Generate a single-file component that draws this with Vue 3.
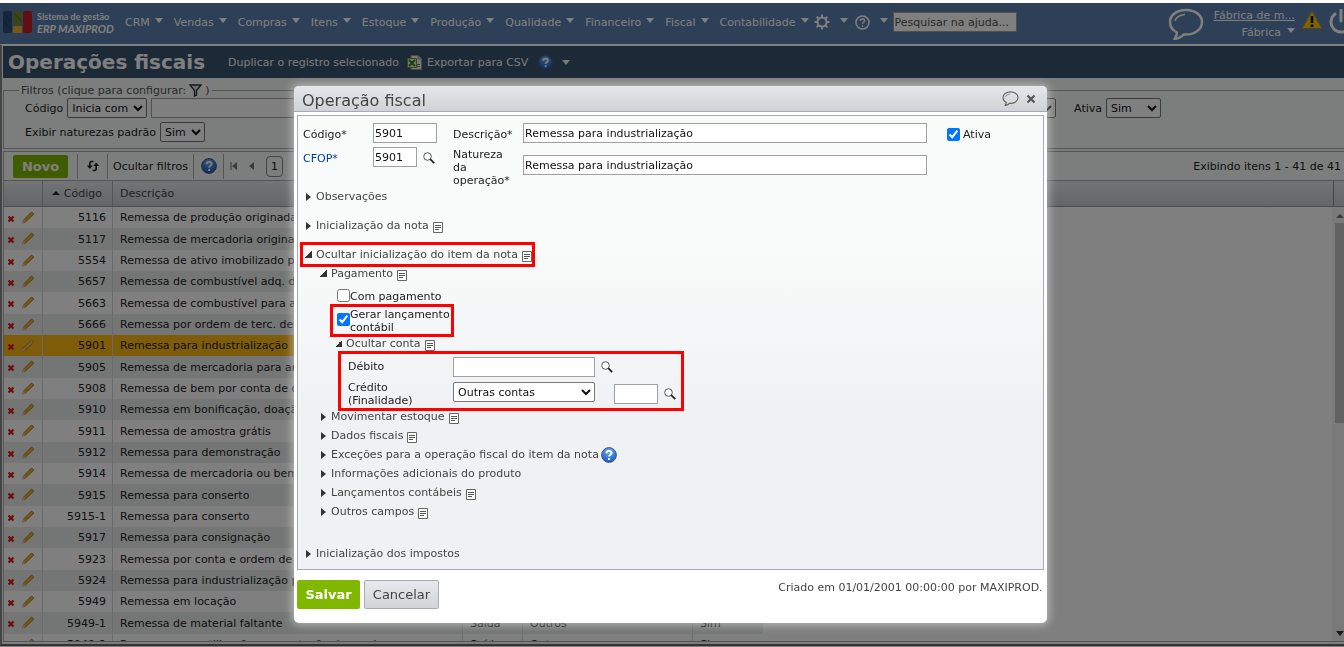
<script setup>
import { ref } from 'vue'

const menus = ['CRM', 'Vendas', 'Compras', 'Itens', 'Estoque', 'Produção', 'Qualidade', 'Financeiro', 'Fiscal', 'Contabilidade']

const rows = [
  ['5116', 'Remessa de produção originada'],
  ['5117', 'Remessa de mercadoria originada'],
  ['5554', 'Remessa de ativo imobilizado p/ uso'],
  ['5657', 'Remessa de combustível adq. de'],
  ['5663', 'Remessa de combustível para arm.'],
  ['5666', 'Remessa por ordem de terc. de comb.'],
  ['5901', 'Remessa para industrialização'],
  ['5905', 'Remessa de mercadoria para arm.'],
  ['5908', 'Remessa de bem por conta de contrato'],
  ['5910', 'Remessa em bonificação, doação'],
  ['5911', 'Remessa de amostra grátis'],
  ['5912', 'Remessa para demonstração'],
  ['5914', 'Remessa de mercadoria ou bem'],
  ['5915', 'Remessa para conserto'],
  ['5915-1', 'Remessa para conserto'],
  ['5917', 'Remessa para consignação'],
  ['5923', 'Remessa por conta e ordem de terc.'],
  ['5924', 'Remessa para industrialização por'],
  ['5949', 'Remessa em locação'],
  ['5949-1', 'Remessa de material faltante', 'Saída', 'Outros', 'Sim'],
  ['5949-2', 'Remessa para utilização na prestação de serviço', 'Saída', 'Outros', 'Sim'],
]

const itemSections = [
  { text: 'Movimentar estoque', note: true },
  { text: 'Dados fiscais', note: true },
  { text: 'Exceções para a operação fiscal do item da nota', help: true },
  { text: 'Informações adicionais do produto' },
  { text: 'Lançamentos contábeis', note: true },
  { text: 'Outros campos', note: true },
]

const codigo = ref('5901')
const cfop = ref('5901')
const descricao = ref('Remessa para industrialização')
const natureza = ref('Remessa para industrialização')
const ativa = ref(true)
const comPagamento = ref(false)
const gerarLancamento = ref(true)
</script>

<template>
  <svg class="defs" width="0" height="0" aria-hidden="true">
    <defs>
      <radialGradient id="ball" cx="50%" cy="25%" r="75%">
        <stop offset="0" stop-color="#6fb0f4" /><stop offset="1" stop-color="#1458c0" />
      </radialGradient>
      <symbol id="note" viewBox="0 0 10 11">
        <path d="M.5.5h9v10h-9z" fill="#fff" stroke="#666" />
        <path d="M2 3.5h6M2 5.5h6M2 7.5h4" stroke="#555" />
      </symbol>
      <symbol id="lens" viewBox="0 0 12 12">
        <circle cx="4.500" cy="4.500" r="3.800" fill="#fff" stroke="#555" />
        <path d="M7.200 7.200l4 4" stroke="#222" stroke-width="1.800" />
      </symbol>
      <symbol id="help" viewBox="0 0 16 16">
        <circle cx="8" cy="8" r="7.4" fill="url(#ball)" stroke="#4a5a78" stroke-width="1" />
        <path d="M5.6 6.2c0-3.2 5-3 5-.2 0 1.7-2.5 1.700-2.500 3.500" fill="none" stroke="#fff" stroke-width="1.900" />
        <path d="M7.100 11h2v2h-2z" fill="#fff" />
      </symbol>
      <symbol id="bubble" viewBox="0 0 36 32">
        <path d="M18 2C9 2 2 7 2 14c0 5 3 8.500 7 10.500 0 2.500-1 4.500-2.500 6.500 4-.5 7-2 9-4.500C26 27 34 22 34 14 34 7 27 2 18 2z" fill="none" stroke="currentColor" stroke-width="2.500" stroke-linejoin="round" />
        <path d="M7 13c1-4 5-6 10-6.500" fill="none" stroke="currentColor" stroke-width="1.500" />
      </symbol>
    </defs>
  </svg>

  <div class="page">
    <header class="top">
      <div class="brand">
        <svg width="29" height="22" viewBox="0 0 29 22" aria-hidden="true">
          <rect width="9" height="22" rx="2" fill="#2c4a80" />
          <rect x="10" width="9" height="14" rx="1" fill="#6e8c2c" />
          <rect x="10" y="15" width="9" height="7" rx="1" fill="#f0b020" />
          <rect x="20" width="9" height="22" rx="2" fill="#c81c28" />
          <path d="M1 2l7 8M1 10l7 9M11 2l7 8" stroke="#20344c" stroke-width="1" opacity=".5" />
        </svg>
        <div class="brand-text"><span>Sistema de gestão</span><em>ERP MAXIPROD</em></div>
      </div>
      <nav class="menu">
        <button v-for="m in menus" :key="m" type="button">{{ m }}<i class="down"></i></button>
        <button type="button" class="icon-menu" aria-label="Configurações">
          <svg width="16" height="16" viewBox="0 0 16 16"><circle cx="8" cy="8" r="4.500" fill="none" stroke="#fff" stroke-width="2" /><path d="M8 .5V3M8 13v2.500M.5 8H3M13 8h2.500M2.700 2.700l1.800 1.800M11.500 11.500l1.800 1.800M2.700 13.300l1.800-1.800M11.500 4.500l1.800-1.800" stroke="#fff" stroke-width="2" /></svg><i class="down"></i>
        </button>
        <button type="button" class="icon-menu" aria-label="Ajuda">
          <svg width="15" height="15" viewBox="0 0 15 15"><circle cx="7.500" cy="7.500" r="6.500" fill="none" stroke="#fff" stroke-width="1.500" /><path d="M5.400 6c0-2.700 4.200-2.500 4.200-.2 0 1.500-2 1.500-2 3M7.600 10.200v1.500" fill="none" stroke="#fff" stroke-width="1.400" /></svg><i class="down"></i>
        </button>
      </nav>
      <input class="search" type="text" placeholder="Pesquisar na ajuda..." aria-label="Pesquisar na ajuda" />
      <div class="user">
        <svg class="talk" width="36" height="32"><use href="#bubble" /></svg>
        <div class="who"><a href="#">Fábrica de m...</a><button type="button">Fábrica<i class="down"></i></button></div>
        <svg width="22" height="20" viewBox="0 0 22 20" aria-hidden="true"><path d="M11 1l10 17.500H1z" fill="#f8c400" stroke="#a08850" stroke-linejoin="round" /><path d="M11 6v7" stroke="#111" stroke-width="2.600" /><path d="M9.700 14.500h2.600V17H9.700z" fill="#111" /></svg>
        <svg class="power" width="15" height="26" viewBox="0 0 15 26" aria-hidden="true"><path d="M6 5a10 10 0 1 0 12 0" fill="none" stroke="#fff" stroke-width="3" stroke-linecap="round" /><path d="M12 1v11" stroke="#fff" stroke-width="3" stroke-linecap="round" /></svg>
      </div>
    </header>

    <main class="work">
      <div class="title">
        <h1>Operações fiscais</h1>
        <button type="button">Duplicar o registro selecionado</button>
        <button type="button" class="csv">
          <svg width="15" height="15" viewBox="0 0 15 15" aria-hidden="true"><path d="M4 .5h7l3.500 3.500v10.500H4z" fill="#eee" stroke="#999" /><path d="M11 .5V4h3.500" fill="#ccc" stroke="#999" /><path d="M.5 3.500h9v9h-9z" fill="#e8f4d8" stroke="#5c9a20" /><path d="M2 5l6 6M8 5l-6 6" stroke="#3c7820" stroke-width="2" /><path d="M10 9.500h3M10 11.500h3" stroke="#777" /></svg>
          Exportar para CSV
        </button>
        <svg class="title-help" width="15" height="15"><use href="#help" /></svg>
        <i class="down"></i>
      </div>

      <fieldset class="filters">
        <legend>Filtros (clique para configurar:
          <svg width="13" height="13" viewBox="0 0 13 13" aria-hidden="true"><path d="M1 1h11L7.500 6.500V11l-2 1V6.500z" fill="#ddd" stroke="#333" stroke-width="1.300" /></svg>
          )</legend>
        <div class="filter-row wide">
          <label for="f-cod">Código</label>
          <select id="f-cod" class="s80"><option>Inicia com</option></select>
          <input type="text" aria-label="Valor do código" />
          <select class="s80" aria-label="Tipo"><option></option></select>
          <label for="f-ativa" class="gap">Ativa</label>
          <select id="f-ativa" class="s55"><option>Sim</option></select>
        </div>
        <div class="filter-row">
          <label for="f-nat">Exibir naturezas padrão</label>
          <select id="f-nat" class="s45"><option>Sim</option></select>
        </div>
      </fieldset>

      <div class="tools">
        <div class="cell"><button type="button" class="new">Novo</button></div>
        <div class="cell w30">
          <svg width="14" height="12" viewBox="0 0 14 12" role="img" aria-label="Atualizar"><path d="M7.500 1.500H5.500Q3.800 1.500 3.800 3.500V7" fill="none" stroke="#222" stroke-width="1.600" /><path d="M.8 5.500h6L3.800 9z" fill="#222" /><path d="M6.500 10.500h2Q10.200 10.500 10.200 8.500V5" fill="none" stroke="#222" stroke-width="1.600" /><path d="M7.200 6h6L10.200 2.500z" fill="#222" /></svg>
        </div>
        <div class="cell w86"><button type="button">Ocultar filtros</button></div>
        <div class="cell w30"><svg width="16" height="16"><use href="#help" /></svg></div>
        <div class="pager">
          <svg width="7" height="8" viewBox="0 0 7 8" aria-hidden="true"><path d="M1 0v8" stroke="#666" /><path d="M7 0v8L2 4z" fill="#777" /></svg>
          <svg width="5" height="8" viewBox="0 0 5 8" aria-hidden="true"><path d="M5 0v8L0 4z" fill="#777" /></svg>
          <button type="button" class="num">1</button>
        </div>
        <span class="count">Exibindo itens 1 - 41 de 41</span>
      </div>

      <div class="grid">
        <table>
          <colgroup><col class="c1" /><col class="c2" /><col class="c3" /><col class="c4" /><col class="c5" /><col class="c6" /><col /><col class="c8" /></colgroup>
          <thead>
            <tr><th></th><th><i class="sort"></i>Código</th><th>Descrição</th><th class="plain"></th><th class="plain"></th><th class="plain"></th><th class="plain"></th><th class="plain end"></th></tr>
          </thead>
          <tbody>
            <tr v-for="r in rows" :key="r[0]" :class="{ on: r[0] === '5901' }">
              <td class="acts">
                <svg width="30" height="14" viewBox="0 0 30 14" aria-hidden="true">
                  <path d="M1.500 5.500l5 5M6.500 5.500l-5 5" stroke="#d81818" stroke-width="2.200" />
                  <path d="M15.500 12l1-3L24.500 1 27 3 18.500 11z" :fill="r[0] === '5901' ? '#e8c070' : '#f0a830'" stroke="#a87428" stroke-width=".8" />
                  <path d="M15 12.500l1.300-3.300 1.900 1.800z" fill="#e8d8b0" />
                </svg>
              </td>
              <td class="code">{{ r[0] }}</td>
              <td>{{ r[1] }}</td>
              <td>{{ r[2] }}</td>
              <td>{{ r[3] }}</td>
              <td class="last">{{ r[4] }}</td>
              <td class="rest" colspan="2"></td>
            </tr>
          </tbody>
        </table>
        <div class="bar" aria-hidden="true"><i class="up"></i><span></span><i class="down"></i></div>
      </div>
    </main>
  </div>

  <div class="shade"></div>

  <section class="modal" role="dialog" aria-labelledby="dlg">
    <div class="cap">
      <h2 id="dlg">Operação fiscal</h2>
      <svg class="talk" width="17" height="15"><use href="#bubble" /></svg>
      <button type="button" aria-label="Fechar"><svg width="10" height="10" viewBox="0 0 10 10"><path d="M1.500 1.500l7 7M8.500 1.500l-7 7" stroke="#555" stroke-width="2.200" /></svg></button>
    </div>

    <div class="panel">
      <div class="form">
        <div class="left">
          <label for="cod">Código*</label><div><input id="cod" v-model="codigo" type="text" class="w64" /></div>
          <label for="cfop" class="blue">CFOP*</label><div><input id="cfop" v-model="cfop" type="text" class="w44" /><svg width="12" height="12"><use href="#lens" /></svg></div>
        </div>
        <div class="mid">
          <label for="desc">Descrição*</label><input id="desc" v-model="descricao" type="text" />
          <label for="nat" class="multi">Natureza da operação*</label><input id="nat" v-model="natureza" class="low" type="text" />
        </div>
        <label class="active"><input v-model="ativa" type="checkbox" />Ativa</label>
      </div>

      <div class="sec"><i class="tri"></i>Observações</div>
      <div class="sec spaced"><i class="tri"></i>Inicialização da nota<svg width="10" height="11"><use href="#note" /></svg></div>
      <div class="sec spaced marked"><i class="tri open"></i>Ocultar inicialização do item da nota<svg width="10" height="11"><use href="#note" /></svg></div>

      <div class="sub">
        <div class="sec"><i class="tri open"></i>Pagamento<svg width="10" height="11"><use href="#note" /></svg></div>
        <div class="pay">
          <label class="check"><input v-model="comPagamento" type="checkbox" />Com pagamento</label>
          <label class="check two marked"><input v-model="gerarLancamento" type="checkbox" /><span>Gerar lançamento<br />contábil</span></label>
          <div class="sec"><i class="tri open"></i>Ocultar conta<svg width="10" height="11"><use href="#note" /></svg></div>
          <div class="account marked">
            <label for="deb">Débito</label>
            <div><input id="deb" type="text" class="w142" /><svg width="12" height="12"><use href="#lens" /></svg></div>
            <label for="cred">Crédito (Finalidade)</label>
            <div><select id="cred" class="w142"><option>Outras contas</option></select><input type="text" class="w44 apart" aria-label="Conta" /><svg width="12" height="12"><use href="#lens" /></svg></div>
          </div>
        </div>
        <div v-for="s in itemSections" :key="s.text" class="sec">
          <i class="tri"></i>{{ s.text }}
          <svg v-if="s.note" width="10" height="11"><use href="#note" /></svg>
          <svg v-if="s.help" class="q" width="16" height="16"><use href="#help" /></svg>
        </div>
      </div>

      <div class="sec final"><i class="tri"></i>Inicialização dos impostos</div>
    </div>

    <div class="foot">
      <button type="button" class="save">Salvar</button>
      <button type="button" class="cancel">Cancelar</button>
      <span>Criado em 01/01/2001 00:00:00 por MAXIPROD.</span>
    </div>
  </section>
</template>

<style>
body { background: #fff; overflow: hidden; }
#app { font: 11px/13px "DejaVu Sans", Verdana, sans-serif; color: #222; }
</style>

<style scoped>
* { box-sizing: border-box; }
button, input, select { font: inherit; color: inherit; margin: 0; }
button { background: none; border: 0; padding: 0; display: flex; align-items: center; white-space: nowrap; }
svg { flex: none; display: block; }
.defs { position: absolute; }
input[type="text"] { height: 20px; border: 1px solid #a0a0a0; background: #fff; padding: 0 1px; color: #111; min-width: 0; border-radius: 0; }
input[type="checkbox"] { width: 13px; height: 13px; flex: none; }
select { height: 20px; background: #fff; border: 1px solid #767676; border-radius: 2px; padding: 0; color: #111; }
.down { width: 0; height: 0; border: 4px solid transparent; border-top: 5px solid currentColor; border-bottom: 0; flex: none; }

.page { height: 100vh; display: flex; flex-direction: column; padding-top: 3px; overflow: hidden; }
.top { height: 41px; flex: none; display: flex; align-items: flex-start; background: #5c80ae; color: #fff; padding-left: 3px; }
.brand { display: flex; gap: 5px; padding-top: 8px; width: 122px; flex: none; }
.brand-text { display: flex; flex-direction: column; font: bold 9px/11px Lato, sans-serif; white-space: nowrap; }
.brand-text em { font-size: 11px; line-height: 13px; }
.menu { display: flex; height: 38px; flex: none; gap: 11px; }
.menu button { gap: 5px; }
.menu .down, .who .down { margin-bottom: 4px; }
.icon-menu { margin-left: -6px; }
.menu .icon-menu { gap: 10px; }
.menu .icon-menu + .icon-menu { margin-left: -4px; }
.search { width: 124px; margin: 9px 0 0 5px; flex: none; }
.search::placeholder { color: #555; opacity: 1; }
.user { margin-left: auto; display: flex; gap: 6px; padding-top: 5px; flex: none; }
.who { display: flex; flex-direction: column; align-items: flex-end; gap: 4px; padding: 1px 0 0 4px; }
.who a { color: inherit; }
.who button { gap: 6px; }
.user > svg { margin-top: 2px; }
.user > .talk { margin-top: 0; }
.user > .power { margin-top: 1px; }

.work { flex: 1; min-height: 0; display: flex; flex-direction: column; border-left: 2px solid #888; border-top: 2px solid #fff; border-bottom: 2px solid #666; margin-bottom: 1px; padding: 0 0 2px 1px; background: #f8fbfa; }
.title { height: 32px; flex: none; display: flex; align-items: center; background: #38526e; color: #f4f4f4; padding-left: 5px; }
.title h1 { font-size: 20px; line-height: 24px; margin: 0 23px 0 0; color: #fff; }
.title .csv { gap: 5px; margin: 0 10px 0 8px; }
.title .down { margin-left: 9px; }
.filters { margin: 6px 0 2px; border: 1px solid #aaa; border-right: 0; padding: 0 0 7px 21px; height: 65px; flex: none; min-width: 0; }
.filters legend { display: flex; align-items: center; gap: 3px; padding: 0 2px; margin-left: -6px; height: 13px; color: #555; }
.filter-row { display: flex; align-items: center; gap: 4px; margin-top: 1px; height: 20px; }
.filter-row + .filter-row { margin-top: 4px; }
.filter-row > input { flex: 1; }
.wide { padding-right: 183px; }
.gap { margin-left: 14px; }
.s80 { width: 80px; } .s55 { width: 55px; } .s45 { width: 45px; }

.tools { height: 29px; flex: none; display: flex; border: 1px solid #aaa; border-right: 0; border-bottom: 0; align-items: center; }
.cell { height: 25px; display: flex; align-items: center; justify-content: center; border-right: 1px solid #aaa; padding: 0 9px; }
.w30 { width: 30px; padding: 0; } .w86 { width: 86px; padding: 0; }
.new { height: 23px; width: 55px; justify-content: center; background: #80b800; color: #fff; font-weight: bold; font-size: 13px; border-radius: 2px; }
.pager { display: flex; align-items: center; gap: 12px; padding-left: 6px; }
.num { width: 17px; height: 21px; justify-content: center; border: 1px solid #888; border-radius: 4px; }
.count { margin-left: auto; padding-right: 3px; }

.grid { flex: 1; min-height: 0; position: relative; overflow: hidden; background: #fff; border: 1px solid #aaa; border-width: 0 0 1px 1px; }
table { width: 100%; table-layout: fixed; border-collapse: separate; border-spacing: 0; }
.c1 { width: 39px; } .c2 { width: 70px; } .c3 { width: 350px; } .c4 { width: 60px; } .c5 { width: 170px; } .c6 { width: 70px; } .c8 { width: 11px; }
th { height: 27px; padding: 0 7px; font-weight: normal; text-align: left; color: #444; background: linear-gradient(#e8e9eb, #c8cacd); border-right: 1px solid #aaa; border-top: 1px solid #aaa; border-bottom: 1px solid #999; }
th:nth-child(2) { text-align: right; padding-right: 10px; }
.plain { border-right: 0; }
.end { border-left: 1px solid #888; padding: 0; }
.sort { display: inline-block; border: 4px solid transparent; border-bottom: 4px solid #222; border-top: 0; margin: 0 4px 2px 0; }
td { height: 21px; padding: 0 7px; white-space: nowrap; overflow: hidden; border-right: 1px solid #d4d4d6; line-height: 13px; }
tr:nth-child(3n+2) td { height: 22px; }
tr:nth-child(even) td { background: #e8edec; }
tr.on td { background: #ffb814; }
td.acts { padding: 0 0 0 3px; }
td.code { text-align: right; padding: 0 6px; }
td.last { border-right: 0; }
tbody tr td.rest { background: #fff; border: 0; }
.bar { position: absolute; right: 0; top: 27px; bottom: 0; width: 12px; background: #f4f4f4; display: flex; flex-direction: column; align-items: center; padding: 7px 0 5px 4px; }
.bar span { width: 10px; height: 200px; background: #c4c4c4; margin-top: 5px; }
.bar .up { border: 4px solid transparent; border-bottom: 4px solid #777; border-top: 0; }
.bar .down { margin-top: auto; color: #334; }

.shade { position: fixed; inset: 3px 0 0; background: rgba(0, 0, 0, .5); }

.modal { position: absolute; left: 294px; top: 86px; width: 56%; min-width: 700px; background: #fff; border-radius: 5px; box-shadow: 0 0 8px 2px rgba(255, 255, 255, .45); }
.cap { height: 26px; display: flex; align-items: center; padding: 4px 11px 0 8px; border-bottom: 1px solid #a6a9b8; background: linear-gradient(#e6e7ea, #d0d2d6); border-radius: 5px 5px 0 0; color: #444; }
.cap h2 { font-size: 16px; line-height: 20px; font-weight: normal; margin: 0 auto 0 0; }
.cap .talk { color: #666; margin: -4px 7px 0 0; }
.cap button { margin-top: -4px; }
.panel { margin: 3px 3px 0; border: 1px solid #a8aab4; background: linear-gradient(#f9fbfa 0, #f9fbfa 30%, #f0f1f4 65%); padding: 7px 5px 6px; color: #444; }
.form { display: flex; color: #222; height: 64px; }
.left { width: 150px; display: grid; grid-template-columns: 70px 1fr; grid-template-rows: 24px 24px; flex: none; }
.left label, .mid label { padding-top: 5px; }
.left div { display: flex; gap: 6px; }
.left svg { margin-top: 5px; }
.blue { color: #003a9c; }
.mid { flex: 1; display: grid; grid-template-columns: 70px 1fr; grid-template-rows: 25px 39px; max-width: 474px; }
.mid .multi { padding: 0 10px 0 0; }
.mid .low { margin-top: 7px; }
.active { display: flex; gap: 3px; margin: 5px 0 0 20px; height: 13px; align-items: center; }
.w64 { width: 64px; } .w44 { width: 44px; } .w142 { width: 142px; }
.sec { height: 19px; width: fit-content; display: flex; align-items: center; padding-left: 3px; }
.spaced { margin-top: 10px; }
.sec svg { margin: 4px 0 0 4px; }
.sec svg.q { margin: 0 0 0 2px; }
.tri { width: 0; height: 0; border: 4px solid transparent; border-left: 5px solid #333; border-right: 0; margin-right: 5px; flex: none; }
.tri.open { width: 7px; height: 7px; border: 0; background: linear-gradient(135deg, transparent 50%, #333 50%); margin: 0 4px 0 -1px; }
.marked { outline: 3px solid #f00; }
.sub { padding-left: 15px; }
.pay { padding-left: 15px; }
.check { display: flex; align-items: center; height: 24px; padding: 3px 0 0 4px; color: #222; width: 118px; white-space: nowrap; }
.check input { margin-bottom: 3px; }
.check.two { height: 27px; padding-top: 0; }
.account { display: grid; grid-template-columns: 105px 1fr; grid-template-rows: 25px 29px; align-items: center; width: 340px; padding-left: 7px; margin: 1px 0 -1px 8px; color: #222; }
.account div { display: flex; align-items: center; }
.account svg { margin-left: 6px; }
.account label { max-width: 80px; }
.account select { margin-bottom: 3px; }
.apart { margin-left: 19px; }
.final { margin-top: 23px; }
.foot { display: flex; gap: 4px; padding: 10px 4px 14px 3px; color: #444; }
.foot span { margin-left: auto; padding-top: 1px; }
.foot button { height: 29px; font-size: 13px; justify-content: center; border-radius: 2px; }
.save { width: 63px; background: #80b800; color: #fff; font-weight: bold; }
.cancel { width: 75px; background: linear-gradient(#e8e9ec, #d2d4d8); border: 1px solid #a8aab4; color: #444; }
</style>
